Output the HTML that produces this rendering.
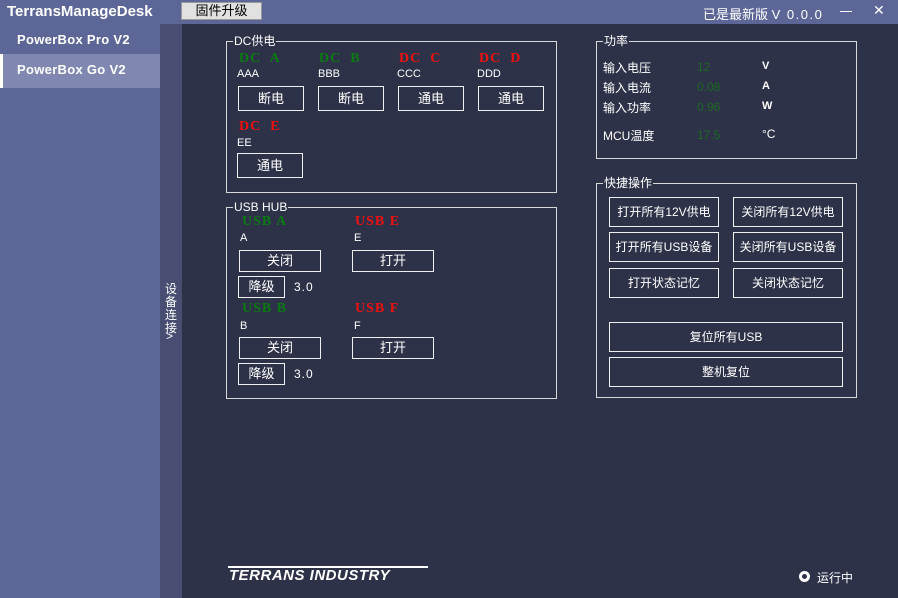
<!DOCTYPE html>
<html><head><meta charset="utf-8"><style>
*{margin:0;padding:0;box-sizing:border-box}
body{width:898px;height:598px;background:#2e3248;position:relative;overflow:hidden;font-family:"Liberation Sans","Noto Sans CJK SC",sans-serif;color:#fff;font-size:12px}
.a{position:absolute;white-space:nowrap}
.top{left:0;top:0;width:898px;height:24px;background:#5d6797}
.side{left:0;top:24px;width:160px;height:574px;background:#5d6797}
.strip{left:160px;top:24px;width:22px;height:574px;background:#474e72}
.sel{left:0;top:54px;width:160px;height:34px;background:#8088b1}
.bar{left:0;top:54px;width:3px;height:34px;background:#fff}
.grp{position:absolute;border:1px solid #d8d8d8}
.gt{position:absolute;top:-8px;left:6px;background:#2e3248;padding:0 1px;font-size:12px;line-height:14px}
.btn{position:absolute;border:1px solid #f0f0f0;font-size:13px;text-align:center;color:#fff}
.mono{font-family:"Liberation Serif",serif;font-weight:bold;font-size:14px;letter-spacing:1px}
.g{color:#0a7a12}.r{color:#f01010}
.val{color:#1a6a22;font-size:12px}
</style></head><body>
<div class="a top"></div>
<div class="a" style="left:7px;top:3px;font-size:15px;font-weight:bold">TerransManageDesk</div>
<div class="a" style="left:181px;top:2px;width:81px;height:18px;background:#e1e1e1;border:1px solid #999;color:#000;font-size:13px;text-align:center;line-height:16px">固件升级</div>
<div class="a" style="left:703px;top:4px;font-size:13px">已是最新版 <span style="letter-spacing:1.5px">V 0.0.0</span></div>
<div class="a" style="left:840px;top:11px;width:12px;height:1px;background:#fff"></div>
<div class="a" style="left:873px;top:2px;font-size:14px">✕</div>
<div class="a side"></div>
<div class="a sel"></div>
<div class="a bar"></div>
<div class="a strip"></div>
<div class="a" style="left:17px;top:32px;font-size:13px;font-weight:bold;letter-spacing:0.3px">PowerBox Pro V2</div>
<div class="a" style="left:17px;top:62px;font-size:13px;font-weight:bold;letter-spacing:0.3px">PowerBox Go V2</div>
<div class="a" style="left:165px;top:283px;width:13px;font-size:12px;line-height:13px;white-space:normal">设备连接</div>
<div class="a" style="left:166px;top:329px;font-size:12px">&gt;</div>

<div class="grp" style="left:226px;top:41px;width:331px;height:152px"><span class="gt">DC供电</span></div>
<div class="a mono g" style="left:239px;top:51px">DC&nbsp; A</div>
<div class="a mono g" style="left:319px;top:51px">DC&nbsp; B</div>
<div class="a mono r" style="left:399px;top:51px">DC&nbsp; C</div>
<div class="a mono r" style="left:479px;top:51px">DC&nbsp; D</div>
<div class="a" style="left:237px;top:68px;font-size:11px">AAA</div>
<div class="a" style="left:318px;top:68px;font-size:11px">BBB</div>
<div class="a" style="left:397px;top:68px;font-size:11px">CCC</div>
<div class="a" style="left:477px;top:68px;font-size:11px">DDD</div>
<div class="btn" style="left:238px;top:86px;width:66px;height:25px;line-height:23px">断电</div>
<div class="btn" style="left:318px;top:86px;width:66px;height:25px;line-height:23px">断电</div>
<div class="btn" style="left:398px;top:86px;width:66px;height:25px;line-height:23px">通电</div>
<div class="btn" style="left:478px;top:86px;width:66px;height:25px;line-height:23px">通电</div>
<div class="a mono r" style="left:239px;top:119px">DC&nbsp; E</div>
<div class="a" style="left:237px;top:137px;font-size:11px">EE</div>
<div class="btn" style="left:237px;top:153px;width:66px;height:25px;line-height:23px">通电</div>

<div class="grp" style="left:226px;top:207px;width:331px;height:192px"><span class="gt">USB HUB</span></div>
<div class="a mono g" style="left:242px;top:214px">USB A</div>
<div class="a mono r" style="left:355px;top:214px">USB E</div>
<div class="a" style="left:240px;top:232px;font-size:11px">A</div>
<div class="a" style="left:354px;top:232px;font-size:11px">E</div>
<div class="btn" style="left:239px;top:250px;width:82px;height:22px;line-height:20px">关闭</div>
<div class="btn" style="left:352px;top:250px;width:82px;height:22px;line-height:20px">打开</div>
<div class="btn" style="left:238px;top:276px;width:47px;height:22px;line-height:20px">降级</div>
<div class="a" style="left:294px;top:280px;font-size:12px;letter-spacing:1px">3.0</div>
<div class="a mono g" style="left:242px;top:301px">USB B</div>
<div class="a mono r" style="left:355px;top:301px">USB F</div>
<div class="a" style="left:240px;top:320px;font-size:11px">B</div>
<div class="a" style="left:354px;top:320px;font-size:11px">F</div>
<div class="btn" style="left:239px;top:337px;width:82px;height:22px;line-height:20px">关闭</div>
<div class="btn" style="left:352px;top:337px;width:82px;height:22px;line-height:20px">打开</div>
<div class="btn" style="left:238px;top:363px;width:47px;height:22px;line-height:20px">降级</div>
<div class="a" style="left:294px;top:367px;font-size:12px;letter-spacing:1px">3.0</div>

<div class="grp" style="left:596px;top:41px;width:261px;height:118px"><span class="gt">功率</span></div>
<div class="a" style="left:603px;top:59px">输入电压</div>
<div class="a" style="left:603px;top:79px">输入电流</div>
<div class="a" style="left:603px;top:99px">输入功率</div>
<div class="a" style="left:603px;top:127px">MCU温度</div>
<div class="a val" style="left:697px;top:60px">12</div>
<div class="a val" style="left:697px;top:80px">0.08</div>
<div class="a val" style="left:697px;top:100px">0.96</div>
<div class="a val" style="left:697px;top:128px">17.5</div>
<div class="a" style="left:762px;top:60px;font-size:11px;font-weight:bold">V</div>
<div class="a" style="left:762px;top:80px;font-size:11px;font-weight:bold">A</div>
<div class="a" style="left:762px;top:100px;font-size:11px;font-weight:bold">W</div>
<div class="a" style="left:762px;top:127px">°C</div>

<div class="grp" style="left:596px;top:183px;width:261px;height:215px"><span class="gt">快捷操作</span></div>
<div class="btn" style="left:609px;top:197px;width:110px;height:30px;line-height:28px;font-size:12px">打开所有12V供电</div>
<div class="btn" style="left:733px;top:197px;width:110px;height:30px;line-height:28px;font-size:12px">关闭所有12V供电</div>
<div class="btn" style="left:609px;top:232px;width:110px;height:30px;line-height:28px;font-size:12px">打开所有USB设备</div>
<div class="btn" style="left:733px;top:232px;width:110px;height:30px;line-height:28px;font-size:12px">关闭所有USB设备</div>
<div class="btn" style="left:609px;top:268px;width:110px;height:30px;line-height:28px;font-size:12px">打开状态记忆</div>
<div class="btn" style="left:733px;top:268px;width:110px;height:30px;line-height:28px;font-size:12px">关闭状态记忆</div>
<div class="btn" style="left:609px;top:322px;width:234px;height:30px;line-height:28px;font-size:12px">复位所有USB</div>
<div class="btn" style="left:609px;top:357px;width:234px;height:30px;line-height:28px;font-size:12px">整机复位</div>

<div class="a" style="left:228px;top:566px;width:200px;height:2px;background:#fff"></div>
<div class="a" style="left:229px;top:567px;font-size:15px;font-weight:bold;font-style:italic;letter-spacing:0.5px">TERRANS INDUSTRY</div>

<div class="a" style="left:799px;top:571px;width:11px;height:11px;border:3px solid #fff;border-radius:50%"></div>
<div class="a" style="left:817px;top:569px;font-size:12px">运行中</div>
</body></html>
